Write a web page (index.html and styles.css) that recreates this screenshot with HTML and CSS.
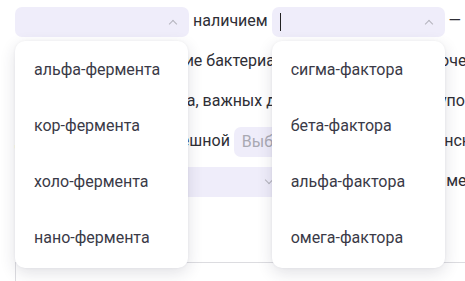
FILE: index.html
```html
<!DOCTYPE html>
<html lang="ru">
<head>
<meta charset="utf-8">
<link rel="stylesheet" href="styles.css">
</head>
<body>
<div class="para">
  <div class="line"><span class="combo"><span class="sel w174 open"><span class="fill"></span><span class="chev up"></span></span><div class="menu"><div class="item">альфа-фермента</div><div class="item">кор-фермента</div><div class="item">холо-фермента</div><div class="item">нано-фермента</div></div></span> наличием <span class="combo"><span class="sel w173 open"><span class="caret"></span><span class="fill"></span><span class="chev up"></span></span><div class="menu"><div class="item">сигма-фактора</div><div class="item">бета-фактора</div><div class="item">альфа-фактора</div><div class="item">омега-фактора</div></div></span> — отличается</div>
  <div class="line">Основное явное отличие бактериальной полимеразы, и очень</div>
  <div class="line">Это и есть субъединица, важных для процесса запуска, упорядоченно</div>
  <div class="line">для связывания и успешной <span class="sel w181"><span class="ph">Выберите</span><span class="chev down"></span></span> транскрипции</div>
  <div class="line">которому из <span class="sel w173"><span class="fill"></span><span class="chev down"></span></span> и выполняет работу, межклеточные</div>
</div>
<div class="box"></div>
</body>
</html>
```
FILE: styles.css
```css
html, body {
  margin: 0;
  padding: 0;
  background: #ffffff;
  overflow: hidden;
}
body {
  width: 465px;
  height: 281px;
  font-family: Roboto, "Noto Sans", sans-serif;
  font-size: 16px;
  color: #2e2e35;
}
.para {
  padding: 1px 0 0 15px;
}
.line {
  height: 40px;
  line-height: 40px;
  white-space: nowrap;
}
.combo {
  position: relative;
  display: inline-block;
  vertical-align: middle;
  line-height: normal;
}
.sel {
  display: inline-flex;
  align-items: center;
  vertical-align: middle;
  height: 30px;
  box-sizing: border-box;
  padding: 0 13px 0 8px;
  border-radius: 7px;
  background: #efedfa;
  line-height: normal;
}
.w174 { width: 174px; }
.w173 { width: 173px; }
.w181 { width: 181px; }
.fill { flex: 1; }
.ph {
  flex: 1;
  color: #a9a9b3;
}
.caret {
  width: 1px;
  height: 18px;
  background: #222;
}
.chev {
  width: 6px;
  height: 6px;
  border-left: 1.6px solid #b4b4bd;
  border-top: 1.6px solid #b4b4bd;
  box-sizing: border-box;
}
.chev.up {
  transform: rotate(45deg);
  margin-top: 4px;
}
.chev.down {
  transform: rotate(225deg);
  margin-top: -3px;
}
.menu {
  position: absolute;
  left: 0;
  top: 34px;
  width: 173px;
  padding: 1px 0 2px;
  background: #ffffff;
  border-radius: 10px;
  box-shadow: 0 5px 16px rgba(40, 40, 70, 0.14), 0 0 3px rgba(40, 40, 70, 0.06);
  z-index: 5;
}
.item {
  height: 56px;
  line-height: 56px;
  padding-left: 19px;
  color: #3a3a47;
}
.box {
  margin: 61px 0 0 15px;
  height: 18px;
  border-top: 1px solid #dcdce0;
  border-left: 1px solid #dcdce0;
}
```
